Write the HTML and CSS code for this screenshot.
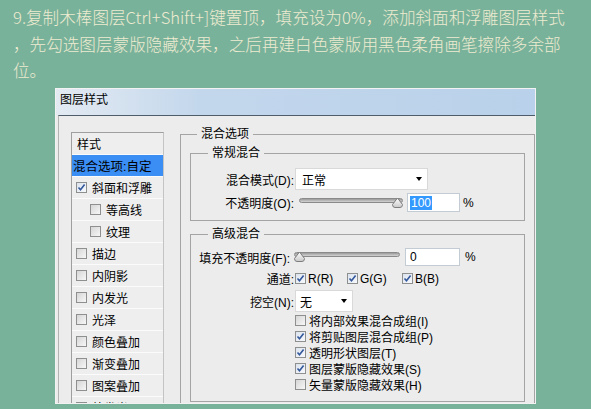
FILE: index.html
```html
<!DOCTYPE html>
<html lang="zh-CN">
<head>
<meta charset="utf-8">
<title>图层样式</title>
<link rel="stylesheet" href="styles.css">
</head>
<body>
<p class="caption">9.复制木棒图层Ctrl+Shift+]键置顶，填充设为0%，添加斜面和浮雕图层样式<br>，先勾选图层蒙版隐藏效果，之后再建白色蒙版用黑色柔角画笔擦除多余部<br>位。</p>
<div class="window">
  <div class="titlebar">图层样式</div>
  <div class="dlg-body">
    <ul class="styles">
      <li class="hdr">样式</li>
      <li class="sel">混合选项:自定</li>
      <li><span class="cb on"><svg viewBox="0 0 9 9" width="9" height="9"><path d="M1.5 4.5 L3.5 6.8 L7.6 1.6" fill="none" stroke="#34589c" stroke-width="1.6"/></svg></span>斜面和浮雕</li>
      <li class="sub"><span class="cb"></span>等高线</li>
      <li class="sub"><span class="cb"></span>纹理</li>
      <li><span class="cb"></span>描边</li>
      <li><span class="cb"></span>内阴影</li>
      <li><span class="cb"></span>内发光</li>
      <li><span class="cb"></span>光泽</li>
      <li><span class="cb"></span>颜色叠加</li>
      <li><span class="cb"></span>渐变叠加</li>
      <li><span class="cb"></span>图案叠加</li>
      <li><span class="cb"></span>外发光</li>
    </ul>
    <fieldset class="grp outer">
      <legend>混合选项</legend>
      <fieldset class="grp normal">
        <legend>常规混合</legend>
        <div class="row r-mode">
          <span class="lbl">混合模式(D):</span>
          <div class="select mode"><span class="val">正常</span><i class="arrow"></i></div>
        </div>
        <div class="row r-op">
          <span class="lbl">不透明度(O):</span>
          <div class="slider op"><div class="track"></div><svg class="thumb at-end" viewBox="0 0 11 11" width="11" height="11"><defs><linearGradient id="tg1" x1="0" y1="0" x2="0" y2="1"><stop offset="0" stop-color="#ffffff"/><stop offset="1" stop-color="#c9c9c9"/></linearGradient></defs><path d="M5.5 1 L10.5 7.5 Q10.5 10.5 8 10.5 H3 Q0.5 10.5 0.5 7.5 Z" fill="url(#tg1)" stroke="#7d7d7d"/></svg></div>
          <div class="num op-num"><span class="hl">100</span></div>
          <span class="pct">%</span>
        </div>
      </fieldset>
      <fieldset class="grp adv">
        <legend>高级混合</legend>
        <div class="row r-fill">
          <span class="lbl fill-lbl">填充不透明度(F):</span>
          <div class="slider fill"><div class="track"></div><svg class="thumb at-start" viewBox="0 0 11 11" width="11" height="11"><defs><linearGradient id="tg2" x1="0" y1="0" x2="0" y2="1"><stop offset="0" stop-color="#ffffff"/><stop offset="1" stop-color="#c9c9c9"/></linearGradient></defs><path d="M5.5 1 L10.5 7.5 Q10.5 10.5 8 10.5 H3 Q0.5 10.5 0.5 7.5 Z" fill="url(#tg2)" stroke="#7d7d7d"/></svg></div>
          <div class="num fill-num">0</div>
          <span class="pct pct2">%</span>
        </div>
        <div class="row r-ch">
          <span class="lbl">通道:</span>
          <span class="chan ch-r"><span class="cb on"><svg viewBox="0 0 9 9" width="9" height="9"><path d="M1.5 4.5 L3.5 6.8 L7.6 1.6" fill="none" stroke="#34589c" stroke-width="1.6"/></svg></span>R(R)</span>
          <span class="chan ch-g"><span class="cb on"><svg viewBox="0 0 9 9" width="9" height="9"><path d="M1.5 4.5 L3.5 6.8 L7.6 1.6" fill="none" stroke="#34589c" stroke-width="1.6"/></svg></span>G(G)</span>
          <span class="chan"><span class="cb on"><svg viewBox="0 0 9 9" width="9" height="9"><path d="M1.5 4.5 L3.5 6.8 L7.6 1.6" fill="none" stroke="#34589c" stroke-width="1.6"/></svg></span>B(B)</span>
        </div>
        <div class="row r-ko">
          <span class="lbl">挖空(N):</span>
          <div class="select ko"><span class="val">无</span><i class="arrow"></i></div>
        </div>
        <div class="opts">
          <div class="opt"><span class="cb"></span>将内部效果混合成组(I)</div>
          <div class="opt"><span class="cb on"><svg viewBox="0 0 9 9" width="9" height="9"><path d="M1.5 4.5 L3.5 6.8 L7.6 1.6" fill="none" stroke="#34589c" stroke-width="1.6"/></svg></span>将剪贴图层混合成组(P)</div>
          <div class="opt"><span class="cb on"><svg viewBox="0 0 9 9" width="9" height="9"><path d="M1.5 4.5 L3.5 6.8 L7.6 1.6" fill="none" stroke="#34589c" stroke-width="1.6"/></svg></span>透明形状图层(T)</div>
          <div class="opt"><span class="cb on"><svg viewBox="0 0 9 9" width="9" height="9"><path d="M1.5 4.5 L3.5 6.8 L7.6 1.6" fill="none" stroke="#34589c" stroke-width="1.6"/></svg></span>图层蒙版隐藏效果(S)</div>
          <div class="opt"><span class="cb"></span>矢量蒙版隐藏效果(H)</div>
        </div>
      </fieldset>
    </fieldset>
  </div>
</div>
</body>
</html>
```

FILE: styles.css
```css
body {
  margin: 0;
  background: #79b29b;
}

.caption {
  margin: 0;
  height: 88px;
  box-sizing: border-box;
  padding: 4px 0 0 13px;
  font-family: "Noto Sans CJK SC", sans-serif;
  font-size: 16.6px;
  font-weight: 300;
  line-height: 26.5px;
  color: #eeebd0;
  white-space: nowrap;
}

.window {
  margin-left: 55px;
  width: 481px;
  height: 316px;
  box-sizing: border-box;
  border: 1px solid #f2f2f2;
  background: #ececec;
  overflow: hidden;
  font-family: "Liberation Sans", "Noto Sans CJK SC", sans-serif;
  font-size: 12px;
  color: #000;
}

.titlebar {
  height: 26px;
  padding-left: 4px;
  line-height: 22px;
  background: linear-gradient(to right, #e3eaf2 0%, #c3d7ec 30%, #b9d1ea 100%);
}

.dlg-body {
  margin-left: 2px;
  height: 300px;
  border-top: 1px solid #4f5c6a;
  border-left: 1px solid #b3b3b3;
  display: flex;
  align-items: flex-start;
  padding-left: 12px;
}

/* styles list */
.styles {
  list-style: none;
  margin: 16px 0 0;
  padding: 0;
  width: 91px;
  flex: none;
  border: 1px solid #9f9f9f;
  border-right-color: #c4c4c4;
  background: #eeeeee;
}

.styles li {
  height: 21px;
  border-bottom: 1px solid #fbfbfb;
  display: flex;
  align-items: center;
  padding-left: 4px;
  white-space: nowrap;
}

.styles .hdr {
  padding-left: 5px;
}

.styles .sel {
  background: #3b8ef3;
  padding-left: 1px;
  font-size: 12.5px;
}

.styles .sub {
  padding-left: 18px;
}

.styles .cb {
  margin-right: 5px;
}

/* checkbox */
.cb {
  width: 11px;
  height: 11px;
  box-sizing: border-box;
  border: 1px solid #8e8f8f;
  background: linear-gradient(135deg, #d6d6d6, #f7f7f7);
  flex: none;
  display: inline-flex;
  align-items: center;
  justify-content: center;
}

.cb.on {
  background: linear-gradient(135deg, #dce3ee, #f7f9fc);
}

.cb svg {
  display: block;
}

/* group boxes */
.grp {
  margin: 0;
  padding: 0;
  min-width: 0;
  border: 1px solid #a4a4a4;
  box-sizing: border-box;
}

.grp legend {
  padding: 0 4px;
  margin-left: 17px;
  line-height: 16px;
}

.outer {
  margin: 10px 0 0 16px;
  width: 355px;
  height: 300px;
  padding: 0 9px;
  flex: none;
}

.outer > legend {
  margin-left: 7px;
}

.normal {
  margin-top: 3px;
  height: 76px;
  padding-top: 7px;
}

.adv {
  margin-top: 5px;
  height: 176px;
  padding-top: 6px;
}

.row {
  display: flex;
  align-items: center;
  white-space: nowrap;
}

.lbl {
  width: 104px;
  flex: none;
  box-sizing: border-box;
  padding-right: 1px;
  text-align: right;
}

.fill-lbl {
  width: 100px;
}

.r-mode {
  height: 22px;
}

.r-op {
  height: 19px;
  margin-top: 3px;
}

.select {
  height: 22px;
  box-sizing: border-box;
  background: #fff;
  border: 1px solid #d9d9d9;
  display: flex;
  align-items: center;
  flex: none;
}

.select .val {
  flex: 1;
}

.mode {
  width: 133px;
  padding-left: 6px;
}

.ko {
  width: 58px;
  padding-left: 4px;
}

.arrow {
  width: 0;
  height: 0;
  border-left: 3.5px solid transparent;
  border-right: 3.5px solid transparent;
  border-top: 4px solid #000;
  margin-right: 5px;
}

.slider {
  position: relative;
  height: 19px;
  flex: none;
}

.slider.op {
  margin-left: 4px;
  width: 104px;
}

.slider.fill {
  margin-left: 3px;
  width: 106px;
  height: 18px;
}

.track {
  margin-top: 5px;
  height: 5px;
  box-sizing: border-box;
  border: 1px solid #8a8a8a;
  border-radius: 3px;
  background: linear-gradient(#9a9a9a, #d4d4d4);
}

.slider.fill .track {
  margin-top: 4px;
}

.thumb {
  position: absolute;
  top: 4px;
  display: block;
}

.slider.fill .thumb {
  top: 3px;
}

.thumb.at-end {
  right: 0;
}

.thumb.at-start {
  left: 0;
}

.num {
  height: 19px;
  box-sizing: border-box;
  background: #fff;
  border: 1px solid #c3cbd5;
  display: flex;
  align-items: center;
  flex: none;
}

.op-num {
  margin-left: 4px;
  width: 53px;
  padding-left: 2px;
}

.hl {
  background: #3399ff;
  color: #fff;
  line-height: 14px;
  padding: 0 1px;
}

.pct {
  margin-left: 3px;
}

.r-fill {
  height: 18px;
}

.fill-num {
  margin-left: 5px;
  width: 55px;
  height: 18px;
  padding-left: 4px;
}

.pct2 {
  margin-left: 5px;
}

.r-ch {
  height: 17px;
  margin-top: 4px;
}

.chan {
  display: flex;
  align-items: center;
  flex: none;
}

.chan .cb {
  margin-right: 2px;
}

.ch-r {
  width: 52px;
}

.ch-g {
  width: 55px;
}

.r-ko {
  height: 22px;
  margin-top: 3px;
}

.opts {
  padding-left: 104px;
}

.opt {
  height: 16px;
  display: flex;
  align-items: center;
  white-space: nowrap;
}

.opt .cb {
  margin-right: 3px;
}
```
